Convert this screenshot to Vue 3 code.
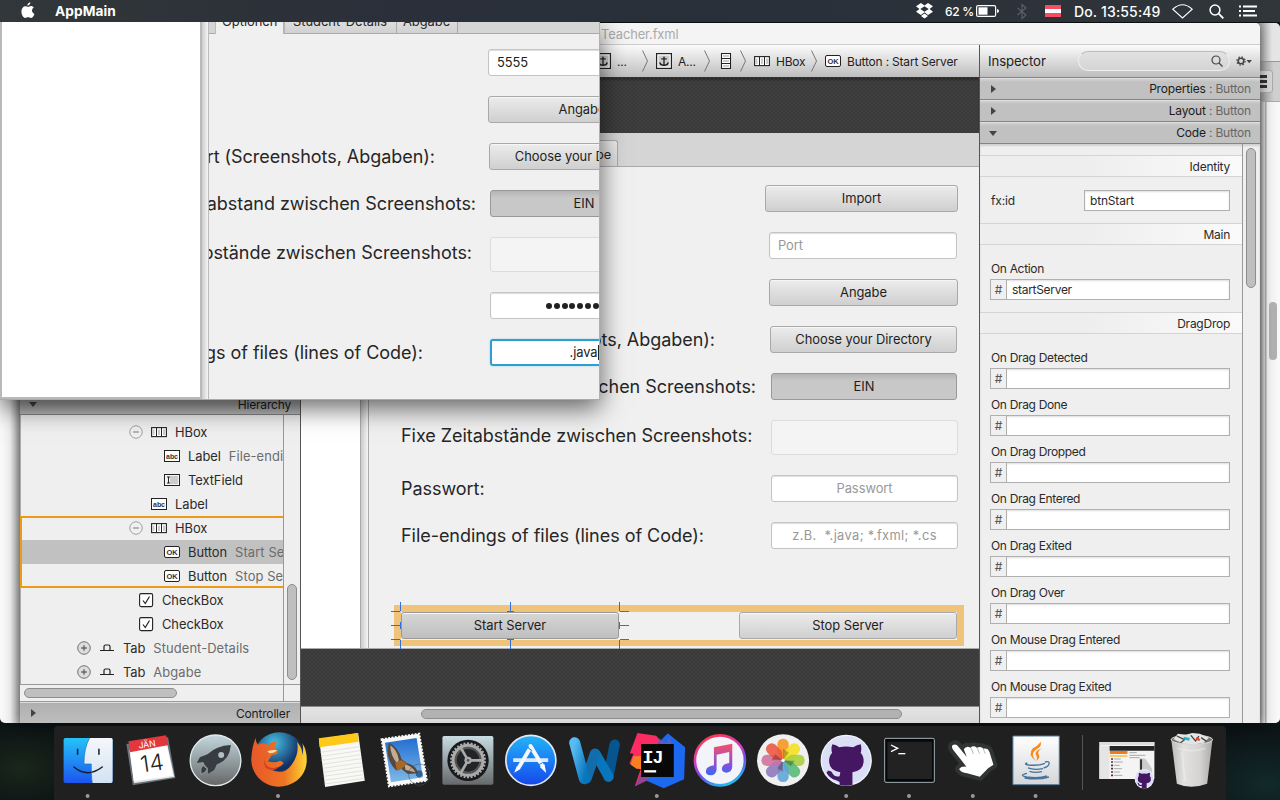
<script setup>
const tree = [
  [
    { pad: 109, toggle: 'minus', icon: 'hbox', name: 'HBox' },
    { pad: 144, icon: 'abc', name: 'Label', info: 'File-endings' },
    { pad: 144, icon: 'field', name: 'TextField' },
    { pad: 131, icon: 'abc', name: 'Label' },
  ],
  [
    { pad: 109, toggle: 'minus', icon: 'hbox', name: 'HBox' },
    { pad: 144, icon: 'ok', name: 'Button', info: 'Start Server', selected: true },
    { pad: 144, icon: 'ok', name: 'Button', info: 'Stop Server' },
  ],
  [
    { pad: 118, icon: 'check', name: 'CheckBox' },
    { pad: 118, icon: 'check', name: 'CheckBox' },
    { pad: 57, toggle: 'plus', icon: 'tab', name: 'Tab', info: 'Student-Details' },
    { pad: 57, toggle: 'plus', icon: 'tab', name: 'Tab', info: 'Abgabe' },
  ],
]
const crumbs = [
  { icon: 'anchor', text: '...', w: 47 },
  { icon: 'anchor', text: 'A...', w: 56 },
  { icon: 'vbox', text: '', w: 30 },
  { icon: 'hbox', text: 'HBox', w: 65 },
  { icon: 'ok', text: 'Button : Start Server', w: 150 },
]
const panels = [
  { name: 'Properties', open: false },
  { name: 'Layout', open: false },
  { name: 'Code', open: true },
]
const handlers = [
  'On Drag Detected', 'On Drag Done', 'On Drag Dropped', 'On Drag Entered',
  'On Drag Exited', 'On Drag Over', 'On Mouse Drag Entered', 'On Mouse Drag Exited',
]
const petals = [
  ['#f7941e', 0], ['#f2e01c', 45], ['#a8cf3a', 90], ['#55b874', 135],
  ['#5da4d8', 180], ['#8d75bd', 225], ['#d0709c', 270], ['#ec5440', 315],
]
const teeth = Array.from({ length: 30 }, (_, i) => i * 12)
</script>

<template>
  <div class="screen">
    <svg class="defs" width="0" height="0" aria-hidden="true">
      <defs>
        <symbol id="i-hbox" viewBox="0 0 16 16"><rect x=".6" y="3.6" width="14.8" height="9" fill="#fff" stroke="#222" stroke-width="1.1" /><path d="M5.5 4v8.500M10.500 4v8.500" stroke="#222" /><path d="M2.500 5.500v5.500M8 5.500v5.500M13 5.500v5.500" stroke="#ccc" stroke-width="2" /></symbol>
        <symbol id="i-vbox" viewBox="0 0 16 16"><rect x="3.500" y=".5" width="9" height="15" fill="#fff" stroke="#222" stroke-width="1.100" /><path d="M4 5.500h8M4 10.500h8" stroke="#222" /><path d="M5 3h6M5 8h6M5 13h6" stroke="#ccc" stroke-width="2" /></symbol>
        <symbol id="i-abc" viewBox="0 0 16 16"><rect x=".5" y="2.500" width="15" height="11" fill="#fff" stroke="#222" /><text x="8" y="10.500" font-size="7" font-weight="600" text-anchor="middle" fill="#333" letter-spacing="-.1">abc</text></symbol>
        <symbol id="i-ok" viewBox="0 0 16 16"><rect x=".5" y="2.500" width="15" height="11" rx="1.500" fill="#fff" stroke="#222" /><text x="8" y="10.700" font-size="7.500" font-weight="600" text-anchor="middle" fill="#333" letter-spacing="-.1">OK</text></symbol>
        <symbol id="i-field" viewBox="0 0 16 16"><rect x=".5" y="2.500" width="15" height="11" fill="#f4f4f4" stroke="#222" /><rect x="6" y="4" width="8" height="8" fill="#ccc" /><path d="M3 5h3M3 11h3M4.500 5v6" stroke="#222" /></symbol>
        <symbol id="i-check" viewBox="0 0 16 16"><rect x="1.600" y="1.600" width="13" height="13" rx="1.500" fill="#fff" stroke="#222" stroke-width="1.100" /><path d="M5 8.500l2.300 3L11.500 4.500" fill="none" stroke="#222" stroke-width="1.200" /></symbol>
        <symbol id="i-tab" viewBox="0 0 16 16"><path d="M1 10.500h4V6.500q0-1.500 1.500-1.500h3q1.500 0 1.500 1.500v4h4M5 10.500h6" fill="none" stroke="#222" stroke-width="1.200" /></symbol>
        <symbol id="i-anchor" viewBox="0 0 16 16"><rect x=".6" y=".6" width="14.800" height="14.800" fill="#fff" stroke="#222" stroke-width="1.200" /><rect x="2.500" y="2.500" width="11" height="11" fill="#ccc" /><path d="M8 3.500v9M5.300 5.800h5.400M3.700 9.500q.8 2.800 4.300 2.800t4.300-2.800" fill="none" stroke="#222" stroke-width="1.300" /></symbol>
        <symbol id="octo" viewBox="600 40 160 160">
          <circle cx="679" cy="121" r="78" fill="#f0f3ff" /><circle cx="679" cy="121" r="74" fill="#dadff5" />
          <path d="M637 72q11 2 21 9q20-4 42 0q12-8 23-9q4 14 0 27q9 9 9 24q0 29-34 34v39q-20 4-39 0v-18q-24 6-29-11q-2-9-9-14q13-3 17 9q6 11 21 7l2-12q-34-5-34-34q0-15 9-24q-4-14 1-27z" fill="#451763" />
        </symbol>
      </defs>
    </svg>

    <div class="back-window">
      <div class="back-title"></div>
      <div class="back-tools"><span class="burger"><i></i><i></i><i></i></span></div>
      <div class="back-body"><span class="back-thumb"></span></div>
    </div>

    <section class="builder">
      <div class="titlebar">Teacher.fxml</div>
      <div class="columns">
        <aside class="left">
          <header class="acc hier"><span class="arrow down"></span><span>Hierarchy</span></header>
          <div class="tree-wrap">
            <div class="tree">
              <div v-for="(g, gi) in tree" :key="gi" class="group" :class="{ marked: gi === 1 }">
                <div v-for="(n, i) in g" :key="i" class="node" :class="{ selected: n.selected }" :style="{ paddingLeft: n.pad + 'px' }">
                  <svg v-if="n.toggle" class="toggle" viewBox="0 0 15 15" :class="n.toggle"><circle cx="7.500" cy="7.500" r="6.700" /><path :d="n.toggle === 'plus' ? 'M4.500 7.500h6M7.500 4.500v6' : 'M4.500 7.500h6'" /></svg>
                  <svg class="ic"><use :href="'#i-' + n.icon" /></svg>
                  <span class="nm">{{ n.name }}</span><span class="info">{{ n.info }}</span>
                </div>
              </div>
            </div>
            <div class="vtrack"><span class="vthumb"></span></div>
          </div>
          <div class="htrack"><span class="hthumb"></span><span class="corner"></span></div>
          <header class="acc ctrl"><span class="arrow right"></span><span>Controller</span></header>
        </aside>

        <main class="center">
          <nav class="crumbs">
            <template v-for="(c, i) in crumbs" :key="i">
              <span class="crumb" :style="{ width: c.w + 'px' }" :class="{ first: i === 0 }"><svg class="ic"><use :href="'#i-' + c.icon" /></svg><span>{{ c.text }}</span></span>
              <svg v-if="i < 4" class="chev" viewBox="0 0 6 22"><path d="M.5 .5L5.500 11L.5 21.500" /></svg>
            </template>
          </nav>
          <div class="canvas top"></div>
          <div class="design">
            <div class="blank"></div>
            <div class="splitter"></div>
            <div class="pane">
              <div class="tabbar"><span class="tab">Abgabe</span></div>
              <div class="form">
                <div class="row"><span></span><span class="btn w193">Import</span></div>
                <div class="row"><span></span><span class="inp left-text shift">Port</span></div>
                <div class="row"><span></span><span class="btn w189">Angabe</span></div>
                <div class="row"><span class="lbl end715">rt (Screenshots, Abgaben):</span><span class="btn w187">Choose your Directory</span></div>
                <div class="row"><span class="lbl end756">abstand zwischen Screenshots:</span><span class="btn w186 on">EIN</span></div>
                <div class="row tall"><span class="lbl">Fixe Zeitabstände zwischen Screenshots:</span><span class="inp off narrow"></span></div>
                <div class="row"><span class="lbl">Passwort:</span><span class="inp narrow">Passwort</span></div>
                <div class="row"><span class="lbl">File-endings of files (lines of Code):</span><span class="inp narrow sample">z.B.&nbsp; *.java; *.fxml; *.cs</span></div>
              </div>
              <div class="actions">
                <span class="btn start">Start Server</span><span class="btn stop">Stop Server</span>
                <svg class="handles" width="240" height="56" viewBox="391 602 240 56"><path d="M400.500 602v9M391 611.500h9M391 639.500h9M400.500 640v9M619.500 602v9M620 611.500h9M620 639.500h9M619.500 640v9M510.500 602v9M507 611.500h7M510.500 640v9M507 639.500h7M391 625.500h9M400.500 622v7M619.500 622v7M620 625.500h9" stroke="#2f6fe0" fill="none" /></svg>
              </div>
            </div>
          </div>
          <div class="canvas bottom"></div>
          <div class="cscroll"><span></span></div>
        </main>

        <aside class="inspector">
          <header class="insp-head">
            <span class="insp-title">Inspector</span>
            <span class="search"><svg width="12" height="12" viewBox="0 0 12 12"><circle cx="5" cy="5" r="4" /><path d="M8 8l3.500 3.500" /></svg></span>
            <svg class="gear" width="17" height="10" viewBox="0 0 17 10"><circle cx="5" cy="5" r="2.800" fill="none" stroke="#444" stroke-width="1.600" /><circle cx="5" cy="5" r="4.100" fill="none" stroke="#444" stroke-width="1.200" stroke-dasharray="1.600 1.620" /><path d="M10.500 4h5.500L13.200 7.200z" fill="#444" /></svg>
          </header>
          <header v-for="p in panels" :key="p.name" class="acc"><span class="arrow" :class="p.open ? 'down' : 'right'"></span><span class="acc-text">{{ p.name }} <em>: Button</em></span></header>
          <div class="insp-body">
            <div class="fields">
              <h4 class="sec first">Identity</h4>
              <div class="fx"><span>fx:id</span><span class="txt">btnStart</span></div>
              <h4 class="sec">Main</h4>
              <div class="ev"><label>On Action</label><div class="hash"><b>#</b><span>startServer</span></div></div>
              <h4 class="sec drag">DragDrop</h4>
              <div v-for="h in handlers" :key="h" class="ev"><label>{{ h }}</label><div class="hash"><b>#</b><span></span></div></div>
            </div>
            <div class="itrack"><span></span></div>
          </div>
        </aside>
      </div>
    </section>

    <section class="app">
      <div class="app-blank"></div>
      <div class="app-split"></div>
      <div class="app-pane">
        <div class="app-tabs"><span class="stub"></span><span class="t cur">Optionen</span><span class="t det">Student-Details</span><span class="t abg">Abgabe</span></div>
        <div class="app-form">
          <div class="arow"><span></span><span class="inp left-text dark x488">5555</span></div>
          <div class="arow"><span></span><span class="btn x488">Angabe</span></div>
          <div class="arow"><span class="lbl e435">rt (Screenshots, Abgaben):</span><span class="btn x489">Choose your Directory</span></div>
          <div class="arow"><span class="lbl e476">abstand zwischen Screenshots:</span><span class="btn on">EIN</span></div>
          <div class="arow tall"><span class="lbl e472">bstände zwischen Screenshots:</span><span class="inp off"></span></div>
          <div class="arow"><span></span><span class="inp dark dots"><i v-for="n in 10" :key="n"></i></span></div>
          <div class="arow"><span class="lbl e423">gs of files (lines of Code):</span><span class="inp dark focus">.java<u></u></span></div>
        </div>
      </div>
    </section>

    <header class="menubar">
      <svg class="apple" width="14" height="17" viewBox="0 0 14 17"><path d="M9.300 .3c.2 1.700-1.200 3.400-2.900 3.400C6.200 2 7.700.5 9.300.3zM7 5c.7 0 1.600-.9 3-.9 1.200 0 2.200.6 2.800 1.500-2.700 1.600-2.100 5.300.6 6.300-.6 1.800-2 4-3.400 4-1.100 0-1.500-.7-2.900-.7s-1.800.7-2.900.7C2.300 15.900.4 12.600.4 9.500c0-3.200 2-5.200 4-5.200C5.600 4.300 6.400 5 7 5z" fill="#fff" /></svg>
      <span class="appname">AppMain</span>
      <span class="grow"></span>
      <svg class="dropbox" width="17" height="16" viewBox="0 0 17 16"><path d="M5 0l3.500 2.600L12 0l5 3.300-3.400 2.700L17 8.800 12 12 8.500 9.300 5 12 0 8.800 3.400 6 0 3.300zM8.500 3.300L4.300 6l4.200 2.700L12.700 6zM5 13l3.500-2.500L12 13l-3.500 2.500z" fill="#fff" /></svg>
      <span class="pct">62 %</span>
      <svg class="batt" width="23" height="12" viewBox="0 0 23 12"><rect x=".6" y=".6" width="19" height="10.800" rx="1.500" fill="none" stroke="#fff" stroke-width="1.200" /><rect x="2.500" y="2.300" width="9" height="7.400" fill="#fff" /><path d="M21 4v4q2-.5 2-2t-2-2z" fill="#fff" /></svg>
      <svg class="bt" width="10" height="15" viewBox="0 0 10 15"><path d="M.5 4l8.500 7-4 3.500V.5l4 3.500-8.500 7" fill="none" stroke="#5b6167" stroke-width="1.100" /></svg>
      <span class="flag"></span>
      <span class="clock">Do. 13:55:49</span>
      <svg class="wifi" width="21" height="15" viewBox="0 0 21 15"><path d="M.8 5.200Q10.500-3.600 20.200 5.200L10.500 14z" fill="none" stroke="#fff" stroke-width="1.100" /></svg>
      <svg class="mag" width="15" height="15" viewBox="0 0 15 15"><circle cx="6" cy="6" r="4.900" fill="none" stroke="#fff" stroke-width="1.500" /><path d="M9.700 9.700L14.300 14.300" stroke="#fff" stroke-width="1.900" /></svg>
      <svg class="list" width="18" height="12" viewBox="0 0 18 12"><path d="M0 1.500h2M4 1.500h14M0 6h2M4 6h12M0 10.500h2M4 10.500h14" stroke="#fff" stroke-width="2" /></svg>
    </header>

    <footer class="dock">
      <svg class="app-icon" viewBox="169.200 18 189.600 222">
        <defs><linearGradient id="fa" x2="0" y2="1"><stop stop-color="#25c3f8" /><stop offset="1" stop-color="#1c55ef" /></linearGradient><linearGradient id="fb" x2="0" y2="1"><stop stop-color="#f5f7fb" /><stop offset="1" stop-color="#d3e2f2" /></linearGradient></defs>
        <rect x="192" y="54" width="147" height="135" rx="5" fill="url(#fa)" /><path d="M270 54h64q5 0 5 5v125q0 5-5 5h-56q-3-18-3-57h-22q0-48 17-78z" fill="url(#fb)" /><path d="M223 141q40 34 85 0M234 88v15M298 88v15" fill="none" stroke="#10202f" stroke-width="4.500" stroke-linecap="round" /><path d="M270 54q-17 30-17 78h22q0 38 3 57" fill="none" stroke="#1c6fae" stroke-width="2" /><circle class="dot" cx="264" cy="228" r="6" />
      </svg>
      <svg class="app-icon" viewBox="358.800 18 189.600 222">
        <path d="M378 72l125-20 22 122-128 22z" fill="#66747b" /><path d="M387 91l114-17 21 97-121 19z" fill="#e5e5e5" /><path d="M389 94l111-17 18 90-118 17z" fill="#fff" /><path d="M384 64l113-18 7 29-115 22z" fill="#e2383d" />
        <g transform="rotate(-8 445 110)"><text x="445" y="82" text-anchor="middle" font-size="26" fill="#fff">JÄN</text><text x="452" y="154" text-anchor="middle" font-size="68" font-weight="300" fill="#222" letter-spacing="0">14</text></g>
      </svg>
      <svg class="app-icon" viewBox="548.400 18 189.600 222">
        <defs><linearGradient id="la" x2="0" y2="1"><stop stop-color="#c3d8de" /><stop offset="1" stop-color="#666" /></linearGradient></defs>
        <circle cx="646" cy="121" r="76" fill="url(#la)" stroke="#e1eaed" stroke-width="4" /><path d="M692 75q-44 2-70 28l-23 9-9 17 19-3q6 13 14 18l1 17 18-11 8-17q38-12 42-58z" fill="#363c40" /><circle cx="663" cy="105" r="9" fill="#b1bfc3" /><path d="M609 137q-10 5-6 26q16-6 18-17z" fill="#363c40" stroke="#939b9e" stroke-width="3" />
      </svg>
      <svg class="app-icon" viewBox="738 18 189.600 222">
        <defs><linearGradient id="ff" x2="1"><stop stop-color="#e7572b" /><stop offset=".6" stop-color="#ee7522" /><stop offset="1" stop-color="#ffd736" /></linearGradient><radialGradient id="fg" cx=".4" cy=".2"><stop stop-color="#46bfe2" /><stop offset="1" stop-color="#123065" /></radialGradient></defs>
        <circle cx="838" cy="115" r="78" fill="url(#fg)" /><path d="M767 54q0 13 7 20q15-9 33 2q7-13 24-12l-8 18 11 13q-6 10-19 10-8 13-11 19 18 7 37-2 7 2 10 8-12 16-42 16 40 24 66-12 24-34 16-68 20 22 14 42 8-18 2-38 15 22 13 56c-4 52-50 75-86 74-45-1-83-39-80-87q2-34 13-59z" fill="url(#ff)" /><path d="M802 94q12-5 29-4-8 10-22 10z" fill="#ffdfae" /><path d="M802 106q-14 12-3 30 12 14 38 4-16 18-40 4-12-20 5-38z" fill="#d14225" /><circle class="dot" cx="834" cy="228" r="6" />
      </svg>
      <svg class="app-icon" viewBox="-2.400 18 189.600 222">
        <path d="M28 58l117-19 20 143-119 19z" fill="#f8f8f5" /><path d="M27 55l117-16 3 26-118 17z" fill="#ffc919" /><path d="M32 97l117-17M34 109l117-17M35 121l117-17M37 133l117-17M39 145l117-17M40 157l117-17M42 169l118-17M44 181l117-17M45 192l118-17" stroke="#d6d6d2" stroke-width="2" />
      </svg>
      <svg class="app-icon" viewBox="187.200 18 189.600 222">
        <defs><linearGradient id="ma" x2="0" y2="1"><stop stop-color="#226fd4" /><stop offset="1" stop-color="#7fb9e5" /></linearGradient></defs>
        <path d="M216 58l113-17 23 141-114 17z" fill="#f8f8f8" stroke="#f8f8f8" stroke-width="6" stroke-dasharray="6 4" /><path d="M226 68l95-14 19 118-96 15z" fill="url(#ma)" /><path d="M238 68q28 12 38 50l16 11q28 6 33 31l-30 2-22-17-14 6-11-14q-22-34-10-69z" fill="#57483d" /><path d="M242 76q21 14 26 44l-5 11q-21-24-21-55zM284 132q23 6 34 25l-30-7z" fill="#c1ad94" /><path d="M257 128l18-8 18 11-15 14-16 8z" fill="#a96725" /><circle cx="329" cy="164" r="32" fill="none" stroke="#46566b" stroke-width="3" opacity=".55" /><path d="M329 151q12 2 10 15-10 14-20 0-3-14 10-15z" fill="#27517c" opacity=".8" />
      </svg>
      <svg class="app-icon" viewBox="376.800 18 189.600 222">
        <defs><linearGradient id="sa" x2="0" y2="1"><stop stop-color="#c8dce2" /><stop offset="1" stop-color="#66696c" /></linearGradient></defs>
        <rect x="396" y="48" width="153" height="146" rx="5" fill="url(#sa)" /><circle cx="473" cy="121" r="62" fill="#181a1b" /><g stroke="#aaa" stroke-width="6"><path v-for="a in teeth" :key="a" d="M473 67v9" :transform="'rotate(' + a + ' 473 121)'" /></g><circle cx="473" cy="121" r="45" fill="#555" stroke="#aaa" stroke-width="9" /><circle cx="473" cy="121" r="34" fill="#222527" /><g stroke="#aaa" stroke-width="8"><path d="M473 121h43M473 121l-22-38M473 121l-22 38" /></g><circle cx="473" cy="121" r="11" fill="#aaa" /><circle cx="473" cy="121" r="4" fill="#555" />
      </svg>
      <svg class="app-icon" viewBox="566.400 18 189.600 222">
        <defs><linearGradient id="aa" x2="0" y2="1"><stop stop-color="#22b5f8" /><stop offset="1" stop-color="#1547ed" /></linearGradient></defs>
        <circle cx="662" cy="121" r="75" fill="url(#aa)" stroke="#e5eaf0" stroke-width="5" /><path d="M609 115h105v11H609z" fill="#d8ebfc" /><path d="M661 78l34 57M656 91l-28 48" stroke="#f2f8fe" stroke-width="12" stroke-linecap="round" /><path d="M689 141l14-8 5 26zM620 138l12 8-20 12z" fill="#fff" /><path d="M666 92l-11-7M697 128l-16 9" stroke="#1875e9" stroke-width="3" />
      </svg>
      <svg class="app-icon" viewBox="756 18 189.600 222">
        <defs><linearGradient id="wa" x2="1" y2="1"><stop stop-color="#58bcf3" /><stop offset="1" stop-color="#0875bd" /></linearGradient></defs>
        <path d="M914 74l-19 96" stroke="#075590" stroke-width="31" stroke-linecap="round" /><path d="M857 102l39 68" stroke="#0876bd" stroke-width="30" stroke-linecap="round" /><path d="M855 101l-25 73" stroke="#136dad" stroke-width="31" stroke-linecap="round" /><path d="M794 68l29 108" stroke="url(#wa)" stroke-width="33" stroke-linecap="round" />
      </svg>
      <svg class="app-icon" viewBox="15.600 18 189.600 222">
        <path d="M53 39l56 8 30 36-20 77-74 39 20-59-31-5-5-5 12-29-11-1z" fill="#fb2b63" /><path d="M40 109l30-1v40l-20-2-17-12z" fill="#f77f21" /><path d="M65 155l38 17-57 27z" fill="#92448e" /><path d="M144 40l52 42-3 96-61 27-52-23 34-38 15-42-17-30z" fill="#1c68ef" /><path d="M104 46l34 22 12-18 14 58-38-30z" fill="#825ba4" opacity=".55" /><path d="M64 72h98v99H64z" fill="#080808" /><text x="68" y="128" font-family="Liberation Mono" font-weight="700" font-size="55" letter-spacing="-3" fill="#fff">IJ</text><path d="M73 154h36" stroke="#fff" stroke-width="7" /><circle class="dot" cx="111" cy="228" r="6" />
      </svg>
      <svg class="app-icon" viewBox="205.200 18 189.600 222">
        <defs><linearGradient id="ia" x1=".2" x2=".6" y2="1"><stop stop-color="#ff3845" /><stop offset=".45" stop-color="#cf41c9" /><stop offset=".65" stop-color="#7148ef" /><stop offset="1" stop-color="#25b9f1" /></linearGradient><linearGradient id="ib" x2="0" y2="1"><stop stop-color="#f85164" /><stop offset=".65" stop-color="#8950d8" /><stop offset="1" stop-color="#346af0" /></linearGradient></defs>
        <circle cx="301" cy="121" r="75" fill="#f3f4f9" stroke="url(#ia)" stroke-width="8" /><path d="M283 82l55-11v69q-1 16-17 18-15 0-14-13 1-13 22-16V96l-38 8v45q-2 16-18 17-15 0-14-13 1-14 24-17z" fill="url(#ib)" />
      </svg>
      <svg class="app-icon" viewBox="394.800 18 189.600 222">
        <circle cx="491" cy="121" r="78" fill="#eff0ef" /><g v-for="p in petals" :key="p[1]" :transform="'rotate(' + p[1] + ' 491 121)'"><path d="M491 121l-17-23V72q1-15 17-16 16 1 17 16v26z" :fill="p[0]" opacity=".88" /></g><path d="M491 121v-35l17 12zM491 121l35 1-12 17zM491 121l-35 0 12-18zM491 121v35l-17-12z" fill="#391e20" opacity=".3" /><circle cx="491" cy="121" r="5" fill="#fff" />
      </svg>
      <svg class="app-icon" viewBox="584.400 18 189.600 222"><use href="#octo" x="600" y="40" width="158" height="160" /><path d="M622 155q4 13 17 18t23 11" fill="none" stroke="#451763" stroke-width="7" /><circle class="dot" cx="678" cy="228" r="6" /></svg>
      <svg class="app-icon" viewBox="774 18 189.600 222">
        <rect x="794" y="55" width="149" height="132" rx="4" fill="#060606" stroke="#a0b1b7" stroke-width="3" /><rect x="802" y="65" width="134" height="112" fill="#222" /><path d="M813 75l20 10-20 10" fill="none" stroke="#fff" stroke-width="4" /><path d="M835 101h21" stroke="#fff" stroke-width="4" /><circle class="dot" cx="867" cy="228" r="6" />
      </svg>
      <svg class="app-icon" viewBox="3.600 18 189.600 222">
        <path d="M38 76q10-7 18 4l25 31-9-23q8-13 20-5 9-8 19 0 13-5 20 3 14-2 18 10l12 38-16 11-25 25-38-10q-18-2-24-13 6-9 22-7L41 91q-7-8-3-15z" fill="#fff" stroke="#303433" stroke-width="24" stroke-linejoin="round" /><path d="M38 76q10-7 18 4l25 31-9-23q8-13 20-5 9-8 19 0 13-5 20 3 14-2 18 10l12 38-16 11-25 25-38-10q-18-2-24-13 6-9 22-7L41 91q-7-8-3-15z" fill="#fff" /><path d="M94 84l7 18M113 84l6 17M131 87l5 14" stroke="#bbb" stroke-width="3" /><circle class="dot" cx="99" cy="228" r="6" />
      </svg>
      <svg class="app-icon" viewBox="193.200 18 189.600 222">
        <defs><linearGradient id="ja" x2="0" y2="1"><stop stop-color="#fff" /><stop offset="1" stop-color="#d3d5d8" /></linearGradient></defs>
        <path d="M220 48h139v146H220z" fill="url(#ja)" stroke="#52799b" stroke-width="3" /><path d="M303 65q5 15-12 22-21 15-2 36-27-19-9-38 18-11 23-20zM308 85q-18 9-10 20 5 8-8 18 5-10-1-18-5-14 19-20z" fill="#f78c18" /><path d="M263 129q-12 4 4 6 30 3 49-5M265 144q19 7 45 2M270 154q15 6 37 1M316 126q17-5 11 9-3 6-15 9M262 160q-26 6-1 11 38 5 61-3M255 174q40 7 73-3" fill="none" stroke="#45739b" stroke-width="4" /><circle class="dot" cx="288" cy="228" r="6" />
      </svg>
      <span class="dock-sep"></span>
      <svg class="app-icon" viewBox="466.800 18 189.600 222">
        <path d="M480 66h165v111H480z" fill="#f4f4f4" /><path d="M480 66h165v9H480z" fill="#ddd" /><path d="M510 78h135v14H510z" fill="#242424" /><path d="M511 93h53v9h-53z" fill="#ed7d14" /><path d="M511 105h53v6h-53z" fill="#f6ca76" /><path d="M480 78h30v99h-30z" fill="#e5e5e5" /><path d="M515 117h6M515 126h6M515 136h6M515 146h6M515 156h6M515 166h6" stroke="#4a3030" stroke-width="5" /><path d="M524 117h20M524 126h26M524 136h17M524 146h24M524 156h18M524 166h25M570 98h22M570 106h48M570 113h30" stroke="#aaa" stroke-width="3" /><path d="M600 114l18 2 20 30v12h-38z" fill="#ccc" /><path d="M605 118v32" stroke="#333" stroke-width="6" /><use href="#octo" x="585" y="146" width="60" height="60" />
      </svg>
      <svg class="app-icon" viewBox="656.400 18 189.600 222">
        <defs><linearGradient id="ta" x2="1"><stop stop-color="#bbb" /><stop offset=".3" stop-color="#e2e1df" /><stop offset=".7" stop-color="#d5d3d1" /><stop offset="1" stop-color="#aaa" /></linearGradient></defs>
        <path d="M693 57l17 134q42 18 91 0l16-134z" fill="url(#ta)" /><ellipse cx="755" cy="59" rx="62" ry="14" fill="#777" stroke="#ddd" stroke-width="3" /><path d="M700 58l13-17 24 3 19-5 23 2 27 12-15 15-28 5-33-2z" fill="#e3e5e3" /><path d="M710 48l23 11-12 9M752 46l14 17 10-15M783 53l16 11" fill="none" stroke="#444" stroke-width="4" /><path d="M730 54l18 4" stroke="#23b6d0" stroke-width="8" /><path d="M767 55l12 5" stroke="#e4452a" stroke-width="7" /><path d="M712 85q41 14 84 0M725 95l10 88" stroke="#fff" stroke-width="5" opacity=".3" fill="none" />
      </svg>
    </footer>
  </div>
</template>

<style>
html, body { margin: 0; background: #0d1314; overflow: hidden; }
</style>

<style scoped>
* { box-sizing: border-box; }
.screen { position: relative; width: 1280px; height: 800px; overflow: hidden; font-family: Inter, "Liberation Sans", sans-serif; font-size: 12px; letter-spacing: -.18px; color: #2a2a2a; background: radial-gradient(ellipse at 1.500% 96%, #1a261b 0, transparent 4%), radial-gradient(ellipse at 99% 98%, #12292a 0, transparent 5%), #0c1315; }
.defs { position: absolute; }
svg { display: block; overflow: visible; flex: none; }
em { font-style: normal; color: #666; }

.menubar { position: absolute; z-index: 20; left: 0; top: 0; width: 1280px; height: 22px; display: flex; align-items: center; background: linear-gradient(90deg, #32373a, #2a2f39 30%, #29303a 65%, #303639); color: #fff; font-size: 14px; }
.apple { margin: -2px 0 0 21px; }
.appname { margin-left: 20px; font-weight: 700; font-size: 13.700px; letter-spacing: .05px; }
.grow { flex: 1; }
.dropbox { margin-right: 12px; }
.pct { width: 31px; font-size: 12px; font-weight: 500; letter-spacing: -.3px; white-space: nowrap; }
.batt { margin-right: 18px; }
.bt { margin-right: 18px; }
.flag { width: 16px; height: 12px; margin-right: 13px; background: linear-gradient(#f94b62 33%, #fff 33% 67%, #f94b62 67%); }
.clock { width: 87px; font-size: 14px; font-weight: 500; letter-spacing: .15px; white-space: nowrap; }
.wifi { margin: 0 16px 0 11px; }
.mag { margin-right: 15px; }
.list { margin-right: 23px; }

.back-window { position: absolute; left: 0; top: 23px; width: 1280px; height: 700px; border-radius: 5px; overflow: hidden; background: linear-gradient(90deg, #fafafa, #eee 10px, #aaa 20px); display: flex; flex-direction: column; align-items: flex-end; }
.back-title { width: 30px; height: 39px; background: linear-gradient(90deg, #aaa 10px, #e5e5e5 22px); border-bottom: 1px solid #999; }
.back-tools { width: 30px; height: 40px; padding: 8px 7px 0 0; display: flex; justify-content: flex-end; background: linear-gradient(90deg, #999 10px, #cfcfcf 24px); border-bottom: 1px solid #aaa; }
.burger { width: 26px; height: 23px; border: 1px solid #aaa; border-radius: 3px; padding: 4px 5px 0 0; display: flex; flex-direction: column; gap: 2px; background: #d5d5d5; }
.burger i { height: 3px; background: #333; }
.back-body { width: 20px; flex: 1; padding: 200px 3px 0 9px; background: linear-gradient(90deg, #999, #d4d4d4 4px, #d8d8d8 5px, #aaa 5px 6px, #eee 7px, #fafafa); }
.back-thumb { display: block; width: 8px; height: 58px; border-radius: 4px; background: #b0b0b0; }

.builder { position: absolute; left: 20px; top: 23px; width: 1240px; height: 700px; border-radius: 5px 5px 0 0; overflow: hidden; background: #efefef; box-shadow: 0 0 12px #0008; }
.titlebar { height: 22px; border-bottom: 1px solid #ccc; background: #f4f4f4; padding-left: 581px; line-height: 23px; font-size: 12.900px; letter-spacing: -.1px; color: #aaa; }
.columns { display: flex; height: 678px; }
.acc { height: 22px; flex: none; padding: 0 9px 0 10px; display: flex; align-items: center; justify-content: space-between; background: linear-gradient(#d2d2d2, #c1c1c1 3px); border-bottom: 1px solid #858585; border-top: 1px solid #ddd; color: #1c1c1c; }
.acc-text { margin-top: -1px; }
.arrow { border: 4px solid transparent; }
.arrow.down { border-top: 5px solid #444; border-bottom: 0; margin-left: -1px; }
.arrow.right { border-left: 5px solid #444; border-right: 0; margin-left: 1px; }

.left { width: 281px; border-right: 1px solid #555; display: flex; flex-direction: column; justify-content: flex-end; }
.acc.hier { background: linear-gradient(#aaa 50%, #bfbfbf); padding-left: 10px; }
.acc.ctrl { height: 21px; border-bottom: 0; background: linear-gradient(#b0b0b0, #bdbdbd); border-top: 1px solid #ddd; padding-right: 10px; }
.tree-wrap { display: flex; height: 270px; border-bottom: 1px solid #999; box-shadow: inset 1px 0 #aaa; }
.tree { width: 264px; border-right: 1px solid #999; padding-top: 5px; overflow: hidden; height: 269px; }
.group { position: relative; }
.marked::after { content: ""; position: absolute; inset: 0; border: 2px solid #ec9a18; border-right: 0; }
.node { height: 24px; display: flex; align-items: center; white-space: nowrap; font-size: 12.900px; letter-spacing: -.05px; }
.selected { background: #c1c1c1; }
.toggle { width: 14px; height: 14px; margin-right: 8px; fill: none; stroke: #999; }
.toggle.plus { stroke: #666; fill: #ddd; }
.toggle path { stroke-width: 1.500; }
.ic { width: 16px; height: 16px; font-family: "Liberation Sans", sans-serif; }
.nm { margin-left: 8px; color: #2b2b2b; }
.info { margin-left: 8px; color: #6c6c6c; letter-spacing: .1px; }
.vtrack { padding: 169px 0 0 3px; }
.vthumb { display: block; width: 10px; height: 96px; border: 1px solid #8d8d8d; border-radius: 5px; background: #bfbfbf; }
.htrack { height: 17px; flex: none; padding: 3px 0 0 4px; display: flex; border-bottom: 1px solid #999; }
.hthumb { width: 153px; height: 10px; border: 1px solid #8d8d8d; border-radius: 5px; background: #bfbfbf; }
.corner { width: 1px; height: 16px; margin: -3px 16px 0 auto; background: #999; }

.center { width: 678px; display: flex; flex-direction: column; }
.crumbs { height: 33px; padding-left: 294px; display: flex; align-items: center; background: linear-gradient(#fbfbfb, #bebebe); border-bottom: 1px solid #333; font-size: 12px; letter-spacing: -.2px; }
.crumb { display: flex; align-items: center; gap: 6px; padding-left: 8px; white-space: nowrap; color: #222; }
.crumb.first { padding-left: 0; }
.chev { width: 6px; height: 22px; fill: none; stroke: #777; }
.canvas { background: repeating-conic-gradient(#393939 0 25%, #404040 0 50%) 0 0 / 4px 4px; }
.canvas.top { height: 55px; box-shadow: inset 0 2px 2px #0004; }
.design { height: 516px; display: flex; border-bottom: 1px solid #aaa; background: #f0f0f0; }
.blank { width: 60px; background: #fff; border-right: 1px solid #aaa; }
.splitter { width: 8px; background: linear-gradient(90deg, #ccc, #f5f5f5); border-right: 1px solid #aaa; }
.pane { flex: 1; display: flex; flex-direction: column; }
.tabbar { height: 34px; display: flex; align-items: flex-end; padding-left: 189px; background: #d5d5d5; border-bottom: 1px solid #aaa; }
.tab { width: 60px; height: 26px; border: 1px solid #aaa; border-bottom: 0; border-radius: 3px 3px 0 0; background: linear-gradient(#eee, #d8d8d8); font-size: 12.800px; line-height: 27px; text-align: right; padding-right: 6px; }
.form { padding: 18px 21px 0 32px; display: flex; flex-direction: column; gap: 20px; }
.row { height: 27px; display: flex; justify-content: space-between; align-items: center; }
.tall { height: 35px; }
.tall .lbl { margin-bottom: 4px; }
.lbl { font-size: 18px; letter-spacing: -.04px; white-space: nowrap; color: #262626; display: flex; justify-content: flex-end; }
.end715 { width: 314px; }
.end756 { width: 355px; }
.btn, .inp { display: flex; align-items: center; justify-content: center; flex: none; width: 188px; height: 27px; border: 1px solid #a9a9a9; border-radius: 3px; font-size: 12.900px; letter-spacing: -.05px; white-space: nowrap; }
.btn { background: linear-gradient(#ececec, #cfcfcf); box-shadow: inset 0 1px #f6f6f6; color: #1e1e1e; }
.inp { background: #fff; border-color: #c4c4c4; box-shadow: inset 0 1px 1px #0002; color: #999; }
.shift { margin-right: 1px; }
.w193 { width: 193px; }
.w189 { width: 189px; }
.w187 { width: 187px; margin-right: 1px; }
.w186 { width: 186px; margin-right: 1px; }
.narrow { width: 187px; }
.sample { letter-spacing: .35px; }
.on { background: linear-gradient(#b4b4b4, #c8c8c8 7px); box-shadow: none; border-color: #999; }
.off { height: 35px; background: #f4f4f4; border-color: #dcdcdc; box-shadow: none; }
.left-text { justify-content: flex-start; padding-left: 8px; }
.dark { color: #222; }
.actions { position: relative; margin: 56px 15px 0 25px; height: 41px; border: 7px solid #efc47a; border-bottom-width: 6px; display: flex; justify-content: space-between; }
.start { width: 218px; background: linear-gradient(#d6d6d6, #bfbfbf); border-color: #999; }
.stop { width: 218px; }
.handles { position: absolute; left: -10px; top: -10px; }
.canvas.bottom { height: 57px; }
.cscroll { flex: 1; padding: 2px 0 0 120px; border-top: 1px solid #888; background: linear-gradient(#e4e4e4, #d8d8d8); }
.cscroll span { display: block; width: 481px; height: 10px; border-radius: 5px; background: #b2b2b2; border: 1px solid #8d8d8d; }

.inspector { width: 281px; border-left: 1px solid #555; display: flex; flex-direction: column; }
.insp-head { height: 33px; flex: none; display: flex; align-items: center; padding-left: 8px; background: linear-gradient(#fbfbfb, #bdbdbd); border-bottom: 1px solid #858585; }
.insp-title { width: 90px; font-size: 13.200px; letter-spacing: -.1px; color: #222; }
.search { width: 152px; height: 20px; border-radius: 10px; border: 1px solid #eee; border-top-color: #bbb; display: flex; justify-content: flex-end; align-items: center; padding-right: 6px; background: linear-gradient(#e2e2e2, #d4d4d4); }
.search svg { fill: none; stroke: #444; stroke-width: 1.200; }
.gear { margin-left: 6px; }
.insp-body { display: flex; flex: 1; min-height: 0; overflow: hidden; box-shadow: inset 0 2px 2px #0002; }
.fields { width: 263px; border-right: 1px solid #999; }
.sec { height: 22px; margin: 0; padding-right: 12px; text-align: right; line-height: 22px; font-size: 12px; letter-spacing: -.25px; font-weight: 400; border: solid #d4d4d4; border-width: 1px 0; background: linear-gradient(90deg, #eee 40%, #fafafa); }
.sec.first { margin-top: 11px; }
.fx { height: 46px; padding: 0 12px 0 11px; display: flex; justify-content: space-between; align-items: center; }
.txt { width: 146px; height: 21px; border: 1px solid #b0b0b0; background: #fff; line-height: 20px; padding-left: 5px; box-shadow: inset 0 1px 2px #0002; }
.ev { height: 47px; padding: 9px 12px 0 10px; display: flex; flex-direction: column; }
.sec + .ev { margin-top: 8px; }
.ev + .sec { margin-top: 12px; }
.ev label { height: 17px; line-height: 13px; padding-left: 1px; letter-spacing: -.33px; }
.hash { height: 21px; display: flex; border: 1px solid #b0b0b0; background: #fff; box-shadow: inset 0 1px 2px #0002; letter-spacing: -.3px; }
.hash b { width: 16px; font-weight: 400; text-align: center; line-height: 20px; background: #f0f0f0; border-right: 1px solid #b0b0b0; color: #555; }
.hash span { padding-left: 5px; line-height: 20px; }
.itrack { padding: 4px 0 0 3px; }
.itrack span { display: block; width: 10px; height: 140px; border: 1px solid #8d8d8d; border-radius: 5px; background: #bfbfbf; }

.app { position: absolute; z-index: 10; left: 0; top: 22px; width: 600px; height: 378px; display: flex; overflow: hidden; background: #f0f0f0; border-bottom: 1px solid #aaa; border-right: 1px solid #b0b0b0; box-shadow: 0 8px 24px #0009; clip-path: inset(0 -60px -60px 0); }
.app-blank { width: 202px; background: #fff; border: 2px solid #b9b9b9; border-top: 0; flex: none; }
.app-split { width: 7px; background: linear-gradient(90deg, #ccc, #f5f5f5); border-right: 1px solid #bbb; flex: none; }
.app-pane { flex: 1; min-width: 0; overflow: hidden; }
.app-tabs { height: 12px; display: flex; overflow: hidden; background: #d5d5d5; box-shadow: inset 0 -1px #aaa; font-size: 12.900px; letter-spacing: -.03px; }
.stub { width: 7px; border-right: 1px solid #bbb; }
.t { height: 12px; line-height: 0; padding-left: 6px; white-space: nowrap; }
.t.cur { width: 69px; background: #f0f0f0; border-right: 2px solid #b5b5b5; }
.t.det { width: 112px; padding-left: 8px; border-right: 1px solid #aaa; background: linear-gradient(#ddd, #d0d0d0); box-shadow: inset 0 -1px #aaa; }
.t.abg { width: 61px; border-right: 1px solid #aaa; background: linear-gradient(#ddd, #d0d0d0); box-shadow: inset 0 -1px #aaa; }
.app-form { width: 469px; padding-top: 15px; display: flex; flex-direction: column; gap: 20px; }
.arow { height: 27px; display: flex; justify-content: space-between; align-items: center; }
.arow.tall { height: 35px; }
.x488 { margin-right: 2px; }
.x489 { margin-right: 1px; }
.e435 { width: 226px; }
.e476 { width: 267px; }
.e472 { width: 263px; }
.e423 { width: 214px; }
.dots { gap: 1.800px; }
.dots i { width: 6px; height: 6px; border-radius: 50%; background: #222; }
.focus { border: 2px solid #2f9fd2; box-shadow: 0 0 2px #8bd0ef; }
.focus u { width: 1px; height: 15px; background: #222; }

.dock { position: absolute; z-index: 5; left: 54px; top: 726px; width: 1172px; height: 74px; padding-left: 2.400px; display: flex; background: #202020; border-radius: 4px 4px 0 0; }
.app-icon { width: 63.200px; height: 74px; }
.dot { fill: #999; }
.dock-sep { width: 1px; height: 55px; margin: 9px 12px 0 15px; background: #555; }
</style>
